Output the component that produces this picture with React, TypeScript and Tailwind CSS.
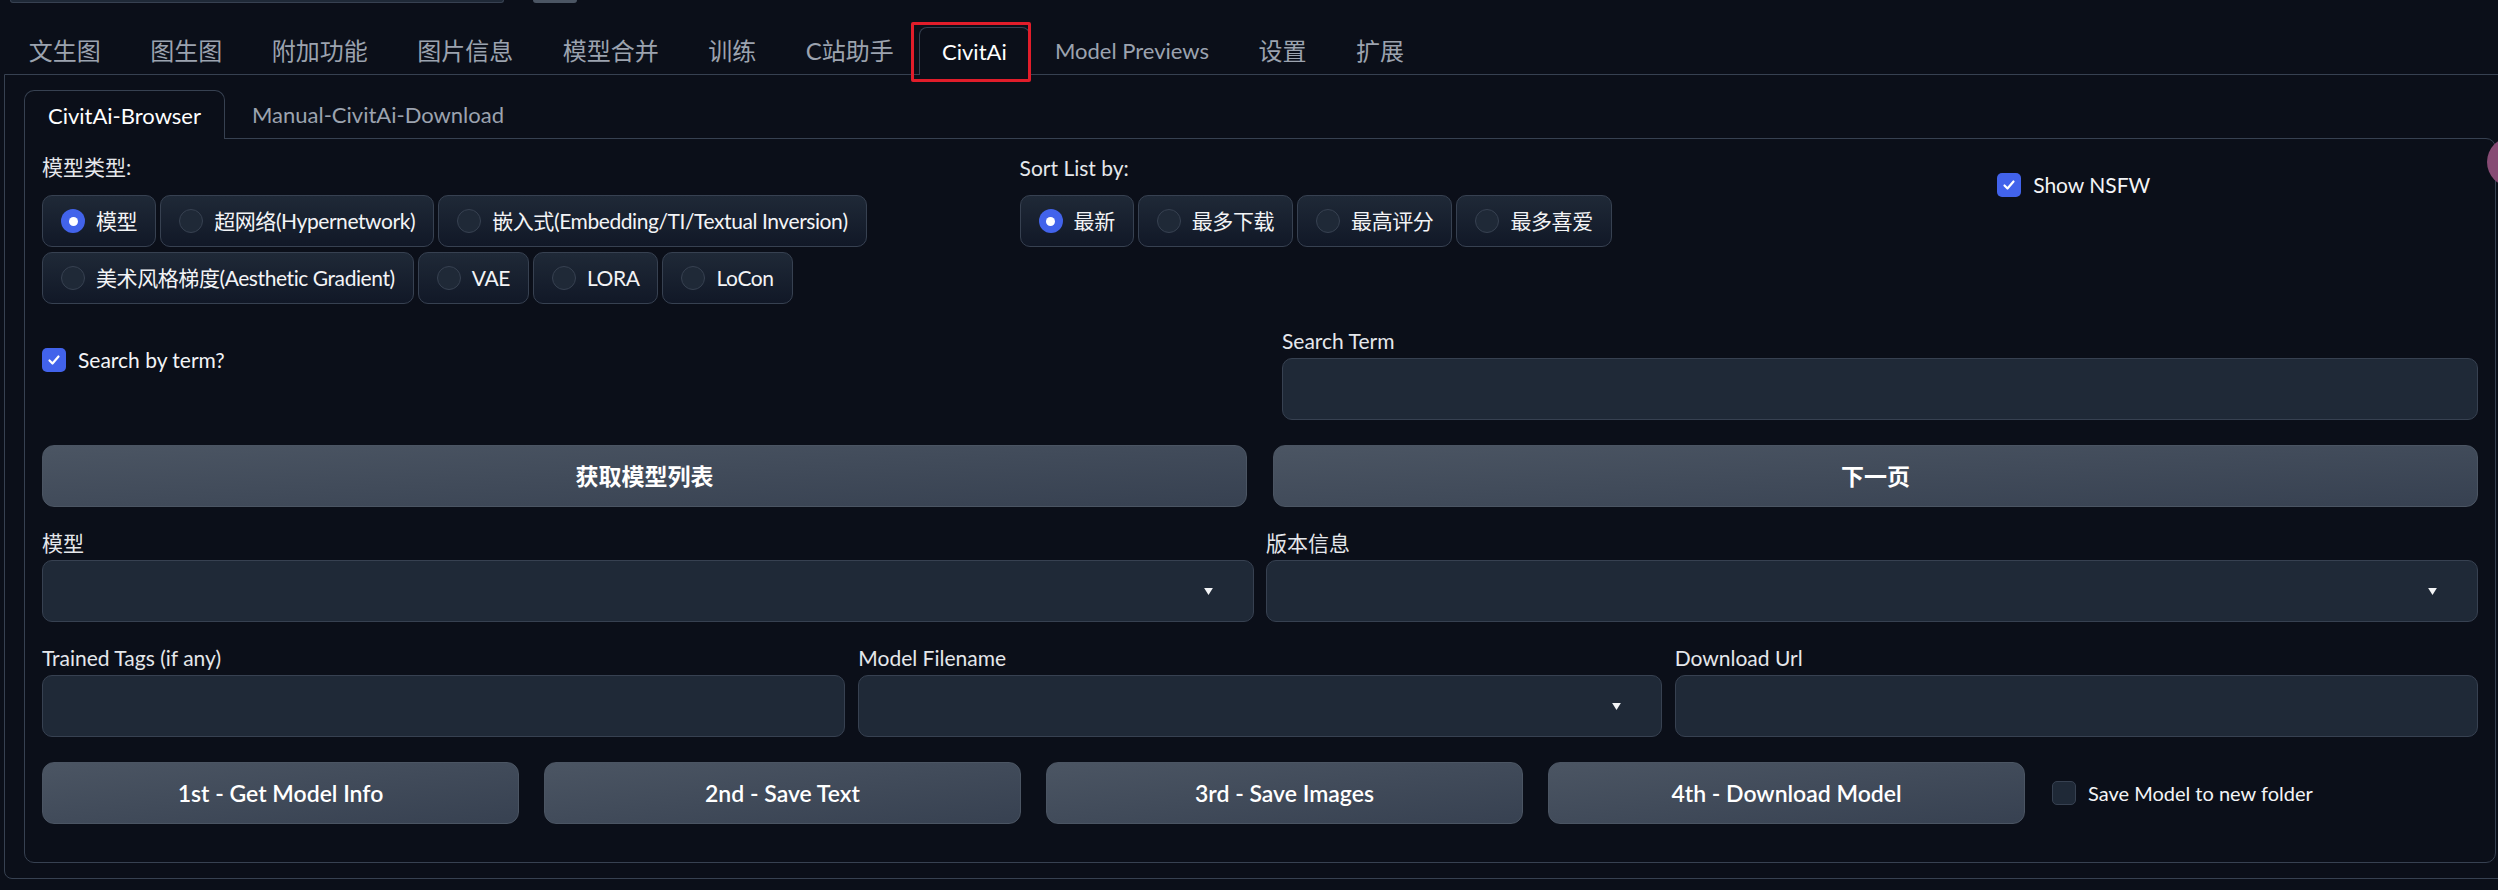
import React from "react";

const topTabs = ["文生图", "图生图", "附加功能", "图片信息", "模型合并", "训练", "C站助手", "CivitAi", "Model Previews", "设置", "扩展"];
const latinTabs = ["CivitAi", "Model Previews"];
const modelTypes = ["模型", "超网络(Hypernetwork)", "嵌入式(Embedding/TI/Textual Inversion)", "美术风格梯度(Aesthetic Gradient)", "VAE", "LORA", "LoCon"];
const sortTypes = ["最新", "最多下载", "最高评分", "最多喜爱"];

function Radio({ label, checked }: { label: string; checked?: boolean }) {
  return (
    <label className="flex h-[52px] items-center gap-[11px] rounded-[10px] border border-[#374151] bg-linear-to-t from-[#111827] to-[#1f2937] px-[18px] text-[21px] tracking-[-0.02em] text-[#f3f4f6]">
      {checked ? (
        <span className="flex h-[24px] w-[24px] items-center justify-center rounded-full bg-[#4263eb]">
          <span className="h-[9px] w-[9px] rounded-full bg-white" />
        </span>
      ) : (
        <span className="h-[24px] w-[24px] rounded-full border border-[#374151] bg-[#1f2937]" />
      )}
      {label}
    </label>
  );
}

function Checkbox({ label, checked, small }: { label: string; checked?: boolean; small?: boolean }) {
  return (
    <label className={`flex h-[24px] items-center gap-[12px] text-[#f3f4f6] ${small ? "text-[20px]" : "text-[21px]"}`}>
      {checked ? (
        <span className="flex h-[24px] w-[24px] shrink-0 items-center justify-center rounded-[5px] bg-[#4263eb]">
          <svg viewBox="0 0 16 16" className="h-[16px] w-[16px]">
            <path d="M3.5 8.5l3 3 6-7" stroke="white" strokeWidth="2.2" fill="none" strokeLinecap="round" strokeLinejoin="round" />
          </svg>
        </span>
      ) : (
        <span className="h-[24px] w-[24px] shrink-0 rounded-[5px] border border-[#374151] bg-[#1f2937]" />
      )}
      {label}
    </label>
  );
}

function Label({ children }: { children: React.ReactNode }) {
  return <div className="h-[27px] text-[21px] leading-[20px] text-[#e5e7eb]">{children}</div>;
}

function Field({ label, dropdown }: { label: string; dropdown?: boolean }) {
  return (
    <div>
      <Label>{label}</Label>
      <div className="flex h-[62px] items-center justify-end rounded-[10px] border border-[#374151] bg-[#1f2937] pr-[40px]">
        {dropdown && (
          <svg viewBox="0 0 10 8" className="h-[7px] w-[9px]">
            <polygon points="0,0 10,0 5,8" fill="#f3f4f6" />
          </svg>
        )}
      </div>
    </div>
  );
}

function Btn({ children }: { children: React.ReactNode }) {
  return (
    <button className="h-[62px] rounded-[12px] border border-[#4b5563] bg-linear-to-br from-[#4b5563] to-[#374151] text-[23px] font-semibold text-white">
      {children}
    </button>
  );
}

export default function App() {
  return (
    <div className="relative h-[890px] w-[2498px] overflow-hidden bg-[#0b0f19] font-[Lato,'Noto_Sans_CJK_SC',sans-serif]">
      {/* top strip */}
      <div className="flex h-[3px] overflow-hidden">
        <div className="ml-[10px] h-[3px] w-[494px] rounded-b-[6px] border-x border-b border-[#374151] bg-[#1f2937]" />
        <div className="ml-[29px] h-[3px] w-[44px] rounded-b-[4px] bg-[#4b5563]" />
      </div>

      {/* main tabs */}
      <div className="mt-[24px] flex h-[47px] items-start pl-[4px]">
        {topTabs.map((t) =>
          t === "CivitAi" ? (
            <div key={t} className="relative z-10 -mb-px flex h-[48px] items-center rounded-t-[8px] border border-b-0 border-[#374151] bg-[#0b0f19] px-[22.5px] text-[22px] text-white">
              {t}
              <span className="absolute -top-[6px] -bottom-[7px] -left-[9px] -right-[2px] rounded-[2px] border-[3px] border-[#e11d2a]" />
            </div>
          ) : (
            <div
              key={t}
              className={`flex h-[47px] items-center px-[24.75px] text-[#9ca3af] ${latinTabs.includes(t) ? "text-[22px]" : "text-[24px]"}`}
            >
              {t}
            </div>
          )
        )}
      </div>

      <div className="ml-[4px] w-[2508px] rounded-b-[8px] border border-[#374151] pt-[15px] pr-[15px] pb-[15px] pl-[19px]">
        {/* sub tabs */}
        <div className="flex h-[48px] items-start">
          <div className="relative z-10 -mb-px flex h-[49px] items-center rounded-t-[10px] border border-b-0 border-[#374151] bg-[#0b0f19] px-[23px] text-[22px] text-white">
            CivitAi-Browser
          </div>
          <div className="flex h-[48px] items-center px-[27px] text-[22px] text-[#9ca3af]">Manual-CivitAi-Download</div>
        </div>

        <div className="flex flex-col rounded-tr-[10px] rounded-b-[10px] border border-[#374151] px-[17px] pt-[20px] pb-[38px]">
          <div className="grid grid-cols-[2fr_2fr_1fr] gap-x-[16px]">
            <div>
              <div className="mb-[10px] h-[26px] text-[21px] leading-[16px] text-[#e5e7eb]">模型类型:</div>
              <div className="flex flex-wrap gap-x-[4px] gap-y-[5px]">
                {modelTypes.map((m, i) => (
                  <Radio key={m} label={m} checked={i === 0} />
                ))}
              </div>
            </div>
            <div>
              <div className="mb-[10px] h-[26px] text-[21px] leading-[18px] text-[#e5e7eb]">Sort List by:</div>
              <div className="flex flex-wrap gap-x-[4px] gap-y-[5px]">
                {sortTypes.map((s, i) => (
                  <Radio key={s} label={s} checked={i === 0} />
                ))}
              </div>
            </div>
            <div className="pt-[14px]">
              <Checkbox label="Show NSFW" checked />
            </div>
          </div>

          <div className="mt-[27px] grid grid-cols-[1224px_1fr] gap-x-[16px]">
            <div className="pt-[17px]">
              <Checkbox label="Search by term?" checked />
            </div>
            <Field label="Search Term" />
          </div>

          <div className="mt-[25px] grid grid-cols-2 gap-x-[26px]">
            <Btn>获取模型列表</Btn>
            <Btn>下一页</Btn>
          </div>

          <div className="mt-[26px] grid grid-cols-2 gap-x-[12px]">
            <Field label="模型" dropdown />
            <Field label="版本信息" dropdown />
          </div>

          <div className="mt-[26px] grid grid-cols-3 gap-x-[13px]">
            <Field label="Trained Tags (if any)" />
            <Field label="Model Filename" dropdown />
            <Field label="Download Url" />
          </div>

          <div className="mt-[25px] grid grid-cols-[repeat(4,477px)_1fr] items-center gap-x-[25px]">
            <Btn>1st - Get Model Info</Btn>
            <Btn>2nd - Save Text</Btn>
            <Btn>3rd - Save Images</Btn>
            <Btn>4th - Download Model</Btn>
            <div className="pl-[2px]">
              <Checkbox label="Save Model to new folder" small />
            </div>
          </div>
        </div>
      </div>

      <div className="absolute top-[137px] left-[2487px] z-20 h-[50px] w-[50px] rounded-full bg-[#874b74]" />
    </div>
  );
}
